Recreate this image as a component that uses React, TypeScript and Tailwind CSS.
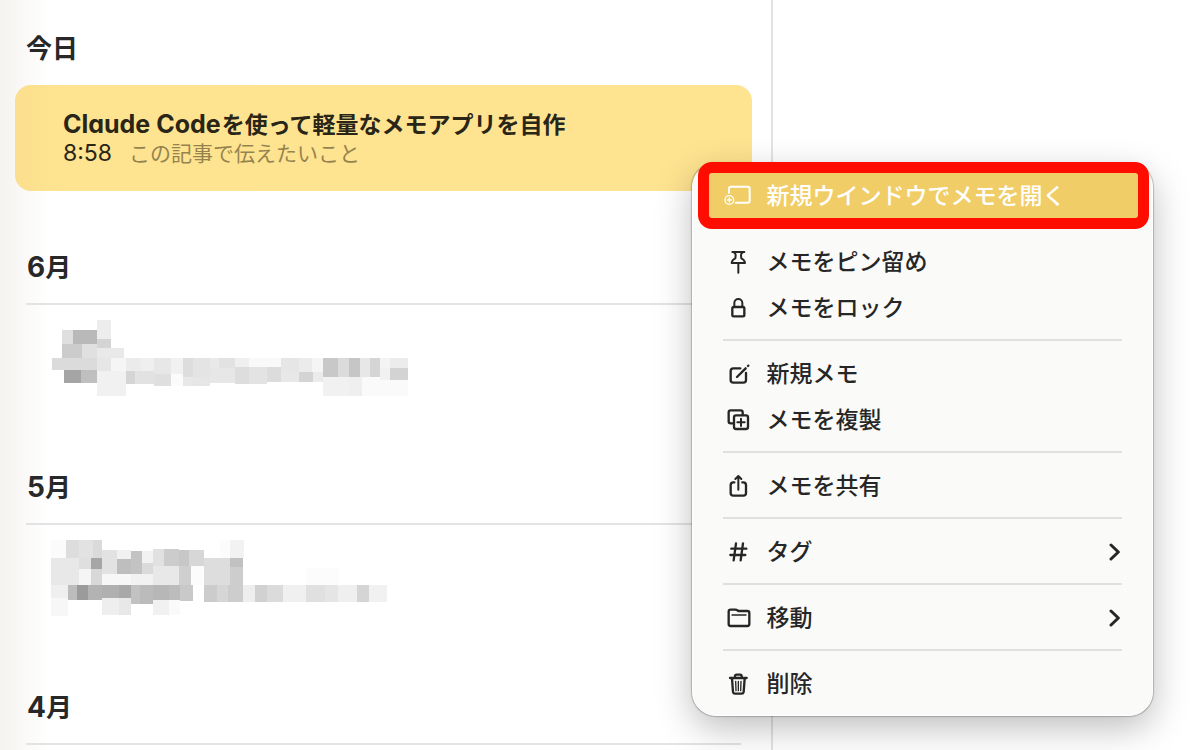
import type { ReactNode } from "react";

type Block = [x: number, y: number, w: number, h: number, fill: string];

// Censored note previews, drawn in thirds of a pixel
const juneBlocks: Block[] = [
  [172, 29, 40, 58, "#ededed"],
  [66, 61, 32, 41, "#dfdfdf"],
  [98, 61, 74, 41, "#b9b9b9"],
  [172, 87, 40, 27, "#d4d4d4"],
  [66, 102, 61, 42, "#cccccc"],
  [127, 102, 45, 42, "#e0e0e0"],
  [172, 114, 80, 30, "#e9e9e9"],
  [36, 144, 136, 37, "#dbdbdb"],
  [172, 144, 40, 39, "#e6e6e6"],
  [212, 144, 45, 39, "#f5f5f5"],
  [257, 144, 45, 39, "#ebebeb"],
  [302, 144, 41, 39, "#efefef"],
  [343, 144, 50, 48, "#e7e7e7"],
  [393, 144, 35, 48, "#f1f1f1"],
  [428, 144, 31, 57, "#dddddd"],
  [459, 144, 51, 57, "#e4e4e4"],
  [510, 144, 28, 30, "#e9e9e9"],
  [538, 144, 46, 30, "#e2e2e2"],
  [584, 144, 43, 27, "#efefef"],
  [627, 144, 96, 27, "#f9f9f9"],
  [723, 144, 54, 42, "#e6e6e6"],
  [777, 144, 40, 42, "#ebebeb"],
  [817, 144, 31, 42, "#f5f5f5"],
  [848, 144, 46, 57, "#c8c8c8"],
  [894, 144, 33, 57, "#dbdbdb"],
  [927, 144, 32, 57, "#c6c6c6"],
  [959, 144, 31, 57, "#e7e7e7"],
  [990, 144, 30, 57, "#d5d5d5"],
  [1020, 144, 30, 30, "#f4f4f4"],
  [1050, 144, 54, 30, "#ececec"],
  [72, 181, 50, 37, "#a5a5a5"],
  [122, 181, 50, 37, "#bfbfbf"],
  [172, 183, 86, 75, "#f1f1f1"],
  [258, 183, 28, 40, "#d5d5d5"],
  [286, 183, 57, 40, "#e2e2e2"],
  [343, 192, 50, 37, "#dfdfdf"],
  [393, 192, 35, 37, "#fbfbfb"],
  [428, 201, 31, 28, "#e8e8e8"],
  [459, 201, 51, 28, "#e6e6e6"],
  [510, 174, 74, 46, "#e7e7e7"],
  [584, 171, 43, 50, "#dddddd"],
  [627, 171, 54, 50, "#e3e3e3"],
  [681, 171, 42, 46, "#dcdcdc"],
  [723, 186, 54, 30, "#e8e8e8"],
  [777, 186, 41, 30, "#d4d4d4"],
  [818, 186, 30, 30, "#ebebeb"],
  [848, 201, 79, 57, "#f1f1f1"],
  [927, 201, 38, 57, "#efefef"],
  [965, 201, 139, 57, "#fafafa"],
  [1020, 174, 30, 36, "#f1f1f1"],
  [1050, 174, 54, 36, "#d3d3d3"],
];

const mayBlocks: Block[] = [
  [33, 29, 45, 54, "#fbfbfb"],
  [78, 29, 40, 54, "#dddddd"],
  [118, 29, 40, 54, "#e2e2e2"],
  [158, 29, 28, 54, "#dadada"],
  [33, 83, 85, 82, "#e8e8e8"],
  [118, 83, 34, 34, "#dfdfdf"],
  [152, 83, 34, 34, "#a6a6a6"],
  [118, 117, 34, 48, "#f5f5f5"],
  [152, 117, 34, 48, "#d8d8d8"],
  [186, 60, 46, 72, "#e2e2e2"],
  [232, 60, 40, 28, "#f1f1f1"],
  [232, 88, 40, 44, "#bebebe"],
  [272, 63, 34, 69, "#c3c3c3"],
  [306, 63, 34, 37, "#f2f2f2"],
  [306, 100, 34, 32, "#dadada"],
  [340, 57, 32, 51, "#e1e1e1"],
  [372, 57, 45, 51, "#cccccc"],
  [417, 60, 30, 48, "#c7c7c7"],
  [447, 60, 46, 48, "#d7d7d7"],
  [186, 132, 86, 33, "#f7f7f7"],
  [272, 132, 68, 33, "#f2f2f2"],
  [340, 108, 77, 57, "#e8e8e8"],
  [417, 108, 37, 57, "#cfcfcf"],
  [454, 108, 39, 57, "#fcfcfc"],
  [493, 83, 77, 82, "#dddddd"],
  [540, 29, 30, 54, "#fcfcfc"],
  [570, 29, 42, 54, "#f2f2f2"],
  [570, 83, 38, 28, "#c1c1c1"],
  [570, 111, 38, 105, "#cdcdcd"],
  [33, 165, 51, 38, "#efefef"],
  [84, 165, 28, 46, "#bcbcbc"],
  [112, 165, 32, 46, "#9b9b9b"],
  [144, 165, 42, 46, "#b3b3b3"],
  [186, 165, 51, 38, "#b0b0b0"],
  [237, 165, 35, 38, "#a8a8a8"],
  [272, 165, 28, 57, "#c2c2c2"],
  [300, 165, 40, 57, "#bbbbbb"],
  [340, 165, 46, 44, "#b7b7b7"],
  [386, 165, 33, 44, "#bcbcbc"],
  [419, 165, 40, 48, "#c9c9c9"],
  [493, 165, 37, 51, "#cccccc"],
  [530, 165, 34, 51, "#d6d6d6"],
  [564, 165, 6, 51, "#cccccc"],
  [33, 203, 51, 54, "#f7f7f7"],
  [186, 203, 51, 51, "#eeeeee"],
  [237, 203, 35, 51, "#e8e8e8"],
  [340, 209, 46, 47, "#f1f1f1"],
  [386, 209, 33, 47, "#fafafa"],
  [608, 165, 36, 51, "#eeeeee"],
  [644, 165, 37, 51, "#d1d1d1"],
  [681, 165, 48, 51, "#dbdbdb"],
  [729, 165, 68, 51, "#f0f0f0"],
  [797, 165, 57, 51, "#e0e0e0"],
  [854, 165, 40, 51, "#e5e5e5"],
  [894, 165, 57, 51, "#efefef"],
  [951, 165, 36, 51, "#d5d5d5"],
  [987, 165, 54, 51, "#f1f1f1"],
  [797, 115, 100, 50, "#fcfcfc"],
];

const icons: Record<string, ReactNode> = {
  window: (
    <>
      <path d="M18 35V23a6 6 0 0 1 6-6h50a6 6 0 0 1 6 6v36a6 6 0 0 1-6 6H38" />
      <circle cx="19" cy="57" r="13" strokeWidth="4" />
      <path d="M19 51v12M13 57h12" strokeWidth="4" />
    </>
  ),
  pin: (
    <>
      <path d="M28 15h36M34 17q4 3 4 8l-1 9q-10 4-11 14h40q-1-10-11-14l-1-9q0-5 4-8" />
      <path d="M46 49v28" />
    </>
  ),
  lock: (
    <>
      <rect x="28" y="42" width="36" height="28" rx="4" strokeWidth="7" />
      <path d="M34 41V30a12 12 0 0 1 24 0v11" />
    </>
  ),
  compose: (
    <>
      <path d="M52 28H31a8 8 0 0 0-8 8v27a8 8 0 0 0 8 8h30a8 8 0 0 0 8-8V42" strokeWidth="7" />
      <path d="M42 54 68 28" strokeWidth="7" />
      <path d="m75 21 1-1" strokeWidth="7" />
    </>
  ),
  duplicate: (
    <>
      <path d="M32 55h-9a6 6 0 0 1-6-6V22a6 6 0 0 1 6-6h30a6 6 0 0 1 6 6v8" strokeWidth="7" />
      <rect x="33" y="31" width="42" height="41" rx="6" strokeWidth="7" />
      <path d="M54 41v22M43 52h22" />
    </>
  ),
  share: (
    <>
      <path d="M34 34h-3a8 8 0 0 0-8 8v24a8 8 0 0 0 8 8h30a8 8 0 0 0 8-8V42a8 8 0 0 0-8-8h-3" strokeWidth="7" />
      <path d="M46 56V16M37 24l9-9 9 9" />
    </>
  ),
  tag: <path d="m39 19-7 51M60 19l-7 51M25 35h45M22 54h45" strokeWidth="7" />,
  folder: (
    <>
      <path d="M17 26a6 6 0 0 1 6-6h14q4 0 6 2l3 2h27a6 6 0 0 1 6 6v33a6 6 0 0 1-6 6H23a6 6 0 0 1-6-6Z" strokeWidth="7" />
      <path d="M27 36h42" strokeWidth="4" />
    </>
  ),
  trash: (
    <>
      <path d="M21 27h50M36 26v-4a5 5 0 0 1 5-5h10a5 5 0 0 1 5 5v4M27 28l3 41q1 5 6 5h20q5 0 6-5l3-41" strokeWidth="7" />
      <path d="m38 37 1 28M46 37v28M54 37l-1 28" strokeWidth="4" />
    </>
  ),
};

type Item = { icon: string; label: string; submenu?: boolean };

const groups: Item[][] = [
  [
    { icon: "pin", label: "メモをピン留め" },
    { icon: "lock", label: "メモをロック" },
  ],
  [
    { icon: "compose", label: "新規メモ" },
    { icon: "duplicate", label: "メモを複製" },
  ],
  [{ icon: "share", label: "メモを共有" }],
  [{ icon: "tag", label: "タグ", submenu: true }],
  [{ icon: "folder", label: "移動", submenu: true }],
  [{ icon: "trash", label: "削除" }],
];

function MenuIcon({ name }: { name: string }) {
  return (
    <svg
      viewBox="0 0 90 90"
      className="size-[30px] shrink-0"
      fill="none"
      stroke="currentColor"
      strokeWidth="6"
      strokeLinecap="round"
      strokeLinejoin="round"
      aria-hidden="true"
    >
      {icons[name]}
    </svg>
  );
}

function MenuItem({ icon, label, submenu }: Item) {
  return (
    <button role="menuitem" className="flex h-[46px] w-full items-center gap-[13px] pr-[23px] pl-5 text-left">
      <MenuIcon name={icon} />
      <span className="flex-1 whitespace-nowrap">{label}</span>
      {submenu ? (
        <svg
          viewBox="0 0 36 54"
          className="h-[18px] w-3"
          fill="none"
          stroke="currentColor"
          strokeWidth="9"
          strokeLinecap="round"
          strokeLinejoin="round"
          aria-hidden="true"
        >
          <path d="M6 6 28 27 6 48" />
        </svg>
      ) : null}
    </button>
  );
}

function ContextMenu() {
  return (
    <div
      role="menu"
      className="absolute top-[78px] left-[calc(100%-60px)] z-10 w-[461px] rounded-3xl border border-white bg-[#fafaf8] pt-[9px] pr-2 pb-2 pl-[10px] text-[23px] leading-[30px] font-medium text-[#262626] shadow-[0_0_1px_1px_rgba(0,0,0,0.22),0_12px_36px_rgba(0,0,0,0.26)]"
    >
      <div className="relative mb-5 bg-[#f1cd68] text-white">
        <MenuItem icon="window" label="新規ウインドウでメモを開く" />
        <span className="pointer-events-none absolute -inset-x-[5px] -top-[11px] -bottom-[10px] rounded-[14px] border-[11px] border-[#ff0d00]" />
      </div>
      {groups.map((group, i) => (
        <div key={group[0].label}>
          {i > 0 ? <hr className="mt-2 mr-[22px] mb-[10px] ml-5 border-t-2 border-[#e0e0df]" /> : null}
          {group.map((item) => (
            <MenuItem key={item.label} {...item} />
          ))}
        </div>
      ))}
    </div>
  );
}

function MonthSection({ month, blocks }: { month: number; blocks?: Block[] }) {
  return (
    <section className="pt-[58px]">
      <h2 className="flex h-9 items-baseline px-[27px] text-[26px] leading-9 font-bold">
        <span className="text-[28px] leading-9">{month}</span>月
      </h2>
      <hr className="mt-[18px] mr-[30px] ml-[26px] border-t-2 border-[#e3e3e3]" />
      <button className="flex h-[106px] w-full pt-[5px] pl-10" aria-label={`${month}月のメモ`}>
        {blocks ? (
          <svg viewBox="0 0 1170 285" className="h-[95px] w-[390px]" shapeRendering="crispEdges" aria-hidden="true">
            {blocks.map(([x, y, w, h, fill]) => (
              <rect key={`${x}-${y}`} x={x} y={y} width={w} height={h} fill={fill} />
            ))}
          </svg>
        ) : null}
      </button>
    </section>
  );
}

export default function App() {
  return (
    <div className="grid h-screen grid-cols-[9fr_5fr] overflow-hidden bg-white font-['Inter','Noto_Sans_CJK_JP',sans-serif] text-[#282828] [font-feature-settings:'cv11']">
      <main className="min-w-0 bg-linear-to-r from-[#f5f3f0] to-white to-[48px]">
        <section className="pt-[31px]">
          <h2 className="px-[26px] text-[26px] leading-9 font-bold">今日</h2>
          <div className="relative mt-[18px] mr-[19px] ml-[15px]">
            <button className="block w-full rounded-2xl bg-[#fee390] bg-linear-to-r from-[#fbdf8e] to-[#fee390] to-[45px] px-12 pt-[25px] pb-[23px] text-left">
              <span className="flex h-[29px] items-baseline gap-px text-[23px] leading-[29px] font-bold whitespace-nowrap text-[#292517]">
                <span className="text-[25px] leading-[29px]">Claude Code</span>
                <span>を使って軽量なメモアプリを自作</span>
              </span>
              <span className="flex h-[29px] items-baseline gap-[17px] text-[21px] leading-[29px] whitespace-nowrap">
                <span className="text-[23px] leading-[29px] text-[#292517]">8:58</span>
                <span className="text-[#95834f]">この記事で伝えたいこと</span>
              </span>
            </button>
            <ContextMenu />
          </div>
        </section>
        <MonthSection month={6} blocks={juneBlocks} />
        <MonthSection month={5} blocks={mayBlocks} />
        <MonthSection month={4} />
      </main>
      <aside className="border-l-2 border-[#e3e3e3]" />
    </div>
  );
}
